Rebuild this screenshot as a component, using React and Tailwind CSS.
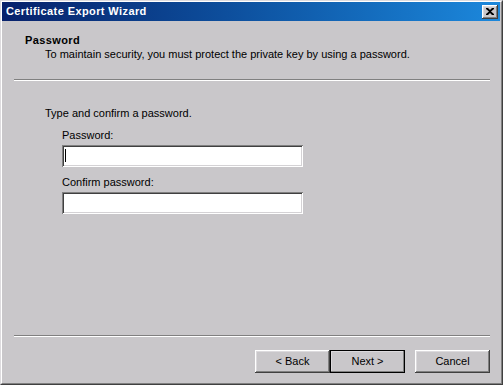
export default function App() {
  const font = { fontFamily: '"Liberation Sans", Arial, sans-serif' };
  const btn =
    "w-[75px] h-[23px] flex items-center justify-center text-[11px] text-black bg-[#c9c7ca] shadow-[inset_-1px_-1px_0_#404040,inset_1px_1px_0_#ffffff,inset_-2px_-2px_0_#808080,inset_2px_2px_0_#dcdadd]";
  const input =
    "w-[241px] h-[22px] bg-white relative shadow-[inset_1px_1px_0_#808080,inset_-1px_-1px_0_#ffffff,inset_2px_2px_0_#404040,inset_-2px_-2px_0_#d4d2d5]";
  return (
    <div
      style={font}
      className="w-[503px] h-[385px] bg-[#c9c7ca] border-l border-t border-l-[#dddbde] border-t-[#dddbde] border-r border-b border-r-[#404040] border-b-[#404040] overflow-hidden"
    >
      <div className="h-full border-l border-t border-l-white border-t-white border-r border-b border-r-[#808080] border-b-[#808080] pr-[1px] flex flex-col">
        {/* Title bar */}
        <div className="h-[19px] bg-gradient-to-r from-[#08216b] to-[#1c88dc] flex items-center justify-between pl-[4px] pr-[2px] shrink-0">
          <span className="text-white font-bold text-[11px] leading-[13px] tracking-[0.4px]">Certificate Export Wizard</span>
          <div className="w-[16px] h-[14px] bg-[#c9c7ca] flex items-center justify-center shadow-[inset_-1px_-1px_0_#404040,inset_1px_1px_0_#ffffff,inset_-2px_-2px_0_#808080,inset_2px_2px_0_#dcdadd]">
            <svg width="8" height="7" viewBox="0 0 8 7">
              <path d="M0 0h2l2 2 2-2h2v1L5 3.5 8 6v1H6L4 5 2 7H0V6l3-2.5L0 1z" fill="#000" />
            </svg>
          </div>
        </div>

        {/* Header */}
        <div className="pt-[12px] text-[11px] leading-[14px] text-black">
          <div className="pl-[23px] font-bold tracking-[0.4px]">Password</div>
          <div className="pl-[43px]">To maintain security, you must protect the private key by using a password.</div>
        </div>
        <div className="ml-[12px] mt-[18px] w-[476px] h-[2px] border-t border-t-[#808080] border-b border-b-white" />

        {/* Body */}
        <div className="pl-[43px] pt-[25px] text-[11px] leading-[14px] text-black">
          <div>Type and confirm a password.</div>
          <div className="pl-[17px] mt-[8px]">Password:</div>
          <div className="ml-[17px] mt-[3px]">
            <div className={input}>
              <div className="absolute left-[3px] top-[4px] w-[1px] h-[13px] bg-black" />
            </div>
          </div>
          <div className="pl-[17px] mt-[8px]">Confirm password:</div>
          <div className="ml-[17px] mt-[3px]">
            <div className={input} />
          </div>
        </div>

        {/* Footer */}
        <div className="ml-[12px] mt-[121px] w-[476px] h-[2px] border-t border-t-[#808080] border-b border-b-white" />
        <div className="flex mt-[13px] pl-[253px] text-[11px]">
          <button className={btn}>&lt; Back</button>
          <button className={btn + " outline outline-1 outline-black -outline-offset-1"}>
            Next &gt;
          </button>
          <button className={btn + " ml-[10px]"}>Cancel</button>
        </div>
      </div>
    </div>
  );
}
